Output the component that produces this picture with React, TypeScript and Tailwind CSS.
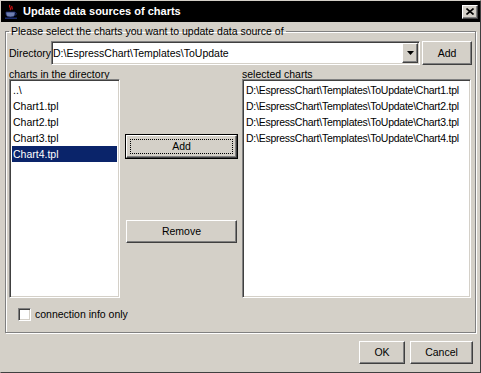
import React from 'react';

// classic 3D borders
const raised =
  'border border-t-white border-l-white border-r-[#404040] border-b-[#404040] shadow-[inset_-1px_-1px_0_#808080]';
const sunken =
  'border border-t-[#808080] border-l-[#808080] border-r-white border-b-white shadow-[inset_1px_1px_0_#404040,inset_-1px_-1px_0_#d4d0c8]';

const files = ['..\\', 'Chart1.tpl', 'Chart2.tpl', 'Chart3.tpl', 'Chart4.tpl'];
const selected = [
  'D:\\EspressChart\\Templates\\ToUpdate\\Chart1.tpl',
  'D:\\EspressChart\\Templates\\ToUpdate\\Chart2.tpl',
  'D:\\EspressChart\\Templates\\ToUpdate\\Chart3.tpl',
  'D:\\EspressChart\\Templates\\ToUpdate\\Chart4.tpl',
];

const JavaIcon = () => (
  <svg width="16" height="16" viewBox="0 0 16 16">
    <path d="M7 1 C5 3 9 4 7 6 M9 2 C8 3.5 10 4 9 5.5" stroke="#e01010" strokeWidth="1.2" fill="none" />
    <path d="M3 8 h9 v2 c0 2 -2 3 -4.5 3 s-4.5 -1 -4.5 -3z" fill="#6f7fb0" stroke="#1a2a6a" strokeWidth="0.8" />
    <path d="M12 8.5 c2 0 2 2.5 0 2.5" stroke="#1a2a6a" fill="none" strokeWidth="1" />
    <rect x="2" y="13.5" width="12" height="1.5" fill="#1a2a6a" />
  </svg>
);

const Button: React.FC<{ label: string; className?: string; focused?: boolean }> = ({ label, className = '', focused }) => (
  <div className={`${focused ? 'outline outline-1 outline-black' : ''} ${className}`}>
    <div className={`${raised} h-full w-full flex items-center justify-center bg-[#d4d0c8]`}>
      <div className={`flex items-center justify-center ${focused ? 'border border-dotted border-black w-[calc(100%-6px)] h-[calc(100%-6px)]' : ''}`}>
        {label}
      </div>
    </div>
  </div>
);

export default function App() {
  return (
    <div className="w-[481px] h-[373px] bg-[#d4d0c8] border border-t-[#d4d0c8] border-l-[#d4d0c8] border-r-[#404040] border-b-[#404040] flex flex-col font-['Liberation_Sans',Arial,sans-serif] text-[10.5px] text-black leading-none overflow-hidden">
      {/* title bar */}
      <div className="h-[21px] bg-black flex items-center pl-[2px] pr-[2px]">
        <JavaIcon />
        <span className="ml-[4px] text-white font-bold text-[11px]">Update data sources of charts</span>
        <div className={`${raised} ml-auto w-[16px] h-[14px] bg-[#d4d0c8] flex items-center justify-center`}>
          <svg width="8" height="7" viewBox="0 0 8 7">
            <path d="M0.5 0.5 L7.5 6.5 M7.5 0.5 L0.5 6.5" stroke="black" strokeWidth="1.6" />
          </svg>
        </div>
      </div>

      {/* group box */}
      <fieldset className="mx-[4px] mt-[3px] h-[308px] border border-[#808080] shadow-[inset_1px_1px_0_#fff,1px_1px_0_#fff] px-[3px]">
        <legend className="px-[2px] leading-[13px]">Please select the charts you want to update data source of</legend>
        <div className="flex items-center h-[24px] mt-[3px]">
          <span className="w-[42px]">Directory</span>
          <div className={`${sunken} bg-white w-[369px] h-[24px] flex items-center pl-[1px]`}>
            <span className="flex-1">D:\EspressChart\Templates\ToUpdate</span>
            <div className={`${raised} w-[16px] h-[20px] bg-[#d4d0c8] flex items-center justify-center mr-[1px]`}>
              <svg width="7" height="4" viewBox="0 0 7 4">
                <path d="M0 0 H7 L3.5 4z" fill="black" />
              </svg>
            </div>
          </div>
          <Button label="Add" className="ml-[2px] w-[50px] h-[24px]" />
        </div>
        <div className="flex h-[14px] items-end">
          <span className="w-[233px]">charts in the directory</span>
          <span>selected charts</span>
        </div>
        <div className="flex h-[219px]">
          <div className={`${sunken} bg-white w-[111px] h-full p-[2px]`}>
            {files.map((f, i) => (
              <div key={f} className={`h-[16px] flex items-center pl-[1px] ${i === 4 ? 'bg-[#0a246a] text-white' : ''}`}>
                {f}
              </div>
            ))}
          </div>
          <div className="flex flex-col pt-[56px] gap-[62px] ml-[6px] w-[111px]">
            <Button label="Add" className="h-[23px]" focused />
            <Button label="Remove" className="h-[23px]" />
          </div>
          <div className={`${sunken} bg-white w-[229px] h-full ml-[5px] p-[2px] tracking-[-0.25px]`}>
            {selected.map((f) => (
              <div key={f} className="h-[16px] flex items-center pl-[1px]">
                {f}
              </div>
            ))}
          </div>
        </div>
        <div className="flex items-center mt-[10px] ml-[9px]">
          <div className={`${sunken} bg-white w-[13px] h-[13px]`} />
          <span className="ml-[4px]">connection info only</span>
        </div>
      </fieldset>

      {/* dialog buttons */}
      <div className="flex justify-end gap-[5px] mt-[8px] mr-[7px]">
        <Button label="OK" className="w-[46px] h-[23px]" />
        <Button label="Cancel" className="w-[63px] h-[23px]" />
      </div>
    </div>
  );
}
